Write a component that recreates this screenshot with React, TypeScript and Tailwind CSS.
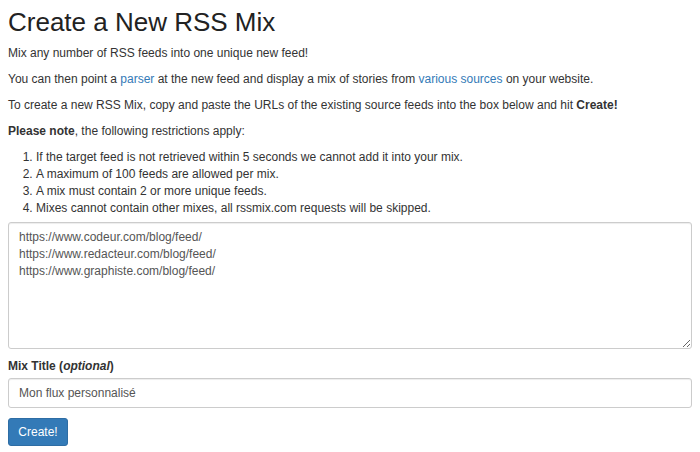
export default function App() {
  return (
    <div
      className="min-h-[452px] bg-white px-2 pt-[8px] text-[12px] leading-[17px] text-[#333]"
      style={{ fontFamily: '"Liberation Sans", Arial, sans-serif' }}
    >
      <h1 className="mb-[8px] text-[26px] leading-[29px] font-normal text-[#222]">
        Create a New RSS Mix
      </h1>
      <p className="mb-[9px]">Mix any number of RSS feeds into one unique new feed!</p>
      <p className="mb-[9px]">
        You can then point a{" "}
        <a href="#" className="text-[#337ab7]">
          parser
        </a>{" "}
        at the new feed and display a mix of stories from{" "}
        <a href="#" className="text-[#337ab7]">
          various sources
        </a>{" "}
        on your website.
      </p>
      <p className="mb-[9px]">
        To create a new RSS Mix, copy and paste the URLs of the existing source feeds into the box
        below and hit <b>Create!</b>
      </p>
      <p className="mb-[9px]">
        <b>Please note</b>, the following restrictions apply:
      </p>
      <ol className="mb-[5px] list-decimal pl-[28px]">
        <li>If the target feed is not retrieved within 5 seconds we cannot add it into your mix.</li>
        <li>A maximum of 100 feeds are allowed per mix.</li>
        <li>A mix must contain 2 or more unique feeds.</li>
        <li>Mixes cannot contain other mixes, all rssmix.com requests will be skipped.</li>
      </ol>

      <form className="flex flex-col" onSubmit={(e) => e.preventDefault()}>
        <textarea
          className="h-[127px] w-full rounded-[3px] border border-[#ccc] px-[10px] py-[6px] text-[12px] leading-[17px] text-[#555] shadow-[inset_0_1px_1px_rgba(0,0,0,0.075)] outline-none"
          defaultValue={
            "https://www.codeur.com/blog/feed/\nhttps://www.redacteur.com/blog/feed/\nhttps://www.graphiste.com/blog/feed/"
          }
        />
        <label className="mt-[9px] mb-[3px] font-bold">
          Mix Title (<i>optional</i>)
        </label>
        <input
          className="h-[30px] w-full rounded-[3px] border border-[#ccc] px-[10px] text-[12px] text-[#555] shadow-[inset_0_1px_1px_rgba(0,0,0,0.075)] outline-none"
          defaultValue="Mon flux personnalisé"
        />
        <div className="mt-[10px]">
          <button
            type="submit"
            className="h-[28px] w-[60px] rounded-[3px] border border-[#2e6da4] bg-[#337ab7] text-[12px] text-white"
          >
            Create!
          </button>
        </div>
      </form>
    </div>
  );
}
